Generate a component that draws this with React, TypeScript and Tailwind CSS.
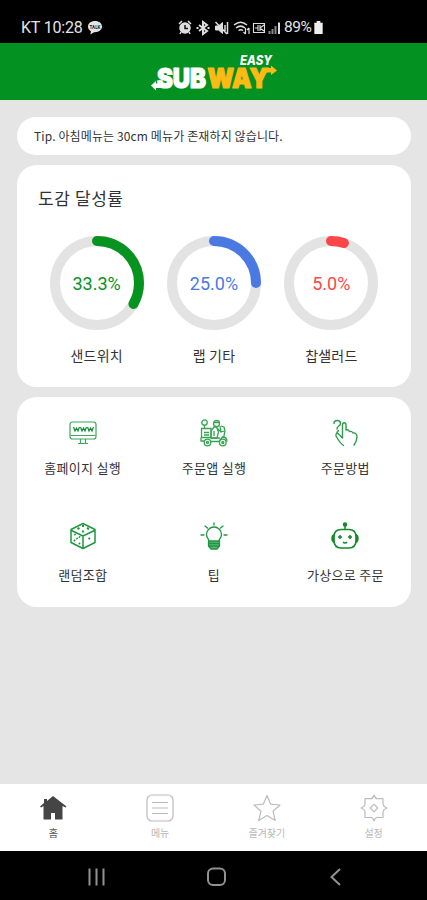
import type { ReactNode } from 'react';

type RingProps = {
  label: string;
  percent: number;
  color: string;
};

type TileProps = {
  label: string;
  icon: ReactNode;
};

type TabProps = {
  label: string;
  icon: ReactNode;
  active?: boolean;
};

const rings: RingProps[] = [
  { label: '샌드위치', percent: 33.3, color: '#07931f' },
  { label: '랩 기타', percent: 25, color: '#4a79e4' },
  { label: '찹샐러드', percent: 5, color: '#fb4747' },
];

function StatusBar() {
  return (
    <div className="flex h-[43px] items-center bg-black pl-[21px] pt-[12px] font-['Roboto',sans-serif] text-base text-[#e4e4e4]">
      <span className="w-[62px] whitespace-nowrap tracking-[-0.2px]">KT 10:28</span>
      <svg className="ml-1" width="16" height="16" viewBox="0 0 16 16">
        <path d="M8 1C3.8 1 1 3.4 1 6.600c0 2 1.100 3.700 2.900 4.700L3.400 14.500 7 12.200c4.600.3 8-2.300 8-5.600S12.200 1 8 1z" fill="#e4e4e4" />
        <text x="8" y="8.500" textAnchor="middle" fontSize="4.500" fontWeight="700" fill="#222">TALK</text>
      </svg>
      <svg className="ml-[75px]" width="103" height="16" viewBox="0 0 103 16" fill="none" stroke="#dedede" strokeWidth="1.500">
        <circle cx="7" cy="8" r="5" fill="#dedede" />
        <path d="M1 4l3-3M10 1l3 3M3 12l-1 2M11 12l1 2" />
        <path d="M7 5v3.500h3" stroke="#111" />
        <path d="M21 5l8 6-4 3V2l4 3-8 6" strokeWidth="2" />
        <path d="M19.500 7v2M30.500 7v2" strokeWidth="2" />
        <path d="M37.500 6h3l4-3.500v11l-4-3.500h-3z" fill="#dedede" strokeWidth="1" />
        <path d="M37.500 2L49 14M47 5v6M49.500 2v12" />
        <path d="M56 5c4-3.500 9-3.500 13 0M58 8c3-2.500 6-2.500 9 0M60.500 10.500c1.500-1 3-1 4.500 0" />
        <path d="M67.500 14V8M65.500 12l2 2M71 8v6M69 10l2-2" strokeWidth="1.200" />
        <path d="M75 3.500h12M75 12.500h12M75.500 3v10M80 5v6M82 5v6M86.500 3v10M77 8h3M82 8l4-3M82 8l4 3" strokeWidth="1.100" />
        <path d="M91.500 14v-3M94.500 14V9M97.500 14V6" stroke="#888" strokeWidth="2" />
        <path d="M101 14V2.500" strokeWidth="2" />
      </svg>
      <span className="ml-[3px] w-7 whitespace-nowrap text-[15.500px] tracking-[-0.4px]">89%</span>
      <svg className="ml-[2px]" width="9" height="13" viewBox="0 0 9 14" fill="#eee">
        <path d="M2.500 0h4v2H9v12H0V2h2.500z" />
      </svg>
    </div>
  );
}

function Logo() {
  return (
    <svg width="128" height="42" viewBox="0 0 128 42" fontFamily="Inter, sans-serif">
      <g fontSize="27" fontWeight="900" strokeWidth="1.200" strokeLinejoin="round">
        <text x="7" y="34.500" textLength="49" lengthAdjust="spacingAndGlyphs" fill="#fff" stroke="#fff">SUB</text>
        <text x="57.500" y="34.500" textLength="61" lengthAdjust="spacingAndGlyphs" fill="#fcba15" stroke="#fcba15">WAY</text>
      </g>
      <path d="M1 32.500l5-4.500v2.500h6V35H6v2.500z" fill="#fff" />
      <path d="M115 15h6v-2.500l6 5-6 4.500v-2.500h-6z" fill="#fcba15" />
      <text x="90" y="11.500" fontSize="13" fontWeight="800" fontStyle="italic" textLength="32" lengthAdjust="spacingAndGlyphs" fill="#fff">EASY</text>
    </svg>
  );
}

function Ring({ label, percent, color }: RingProps) {
  return (
    <div className="flex flex-col items-center">
      <div className="grid size-[94px] place-items-center">
        <svg className="col-start-1 row-start-1" width="94" height="94" viewBox="0 0 94 94" fill="none" strokeWidth="10">
          <circle cx="47" cy="47" r="42" stroke="#e3e3e3" />
          <circle
            cx="47"
            cy="47"
            r="42"
            stroke={color}
            strokeLinecap="round"
            pathLength="100"
            strokeDasharray={`${percent} 100`}
            transform="rotate(-90 47 47)"
          />
        </svg>
        <span
          className="col-start-1 row-start-1 pt-[2px] font-['Roboto',sans-serif] text-[18px] leading-none"
          style={{ color }}
        >
          {percent.toFixed(1)}%
        </span>
      </div>
      <span className="mt-[15px] text-[14px] leading-5 tracking-[0.2px]">{label}</span>
    </div>
  );
}

function MonitorIcon() {
  return (
    <svg width="28" height="28" viewBox="0 0 28 28" fill="none" stroke="#3fa65a" strokeWidth="1.200">
      <rect x="1" y="3" width="26" height="17" rx="2.500" />
      <path d="M1.500 16.500h25M11.500 20v4M16.500 20v4M9 24.500h10" />
      <path d="M4.500 8l1.500 4 1.500-3 1.500 3 1.500-4M11.500 8l1.500 4 1.500-3 1.500 3 1.500-4M18.500 8l1.500 4 1.500-3 1.500 3 1.500-4" stroke="#128a35" />
    </svg>
  );
}

function ScooterIcon() {
  return (
    <svg width="28" height="28" viewBox="0 0 28 28" fill="none" stroke="#36a552" strokeWidth="1.300">
      <circle cx="4.500" cy="3.500" r="2.700" />
      <path d="M4.500 6v3M1.500 9.500H11v9H1.500zM4 13.500h5M4 16h5" />
      <circle cx="16.500" cy="4.500" r="3" />
      <path d="M13 3.500h7M14 8l-3 4v7h6l1.500-6-2-5zM17 9l4 4 3-1M21 7l3 1 1 4-1.500 7M20 7l1 6" />
      <path d="M1 18.500V22h3M11 22.500h8l3.500-4.500c3 0 4.500 2 4.500 4.500M11 19h9M14 12v5" />
      <circle cx="7.500" cy="23.500" r="3.300" />
      <circle cx="22.800" cy="23.500" r="3.300" />
      <circle cx="7.500" cy="23.500" r="1" />
      <circle cx="22.800" cy="23.500" r="1" />
    </svg>
  );
}

function GestureIcon() {
  return (
    <svg width="28" height="28" viewBox="0 0 28 28" fill="none" stroke="#2c9d4a" strokeWidth="1.400" strokeLinecap="round" strokeLinejoin="round">
      <path d="M3 4.500C3 .5 9.500.5 9.500 4.500 9.500 7.500 6 6.500 6 10" />
      <path d="M12.500 26.500c-3-2-5-5-7.500-9.500-.5-3 1.500-3.500 3-1.500l3.500 3.500V6c0-3 3.500-3 3.500 0v5c1.500-.5 3 .5 3.500 1.500 2-.5 3 .5 3.500 1.500 2.500-.5 4 1.500 4 4 0 3-1 5-3 8" />
      <path d="M6 13.500l1.500-2" />
    </svg>
  );
}

function DiceIcon() {
  return (
    <svg width="28" height="28" viewBox="0 0 28 28" fill="none" stroke="#219641" strokeWidth="1.500" strokeLinejoin="round">
      <path d="M14 1.500l12 6v13l-12 6-12-6v-13zM2.500 8.500L14 14l11.500-5.500M14 14v12" />
      <path d="M8.500 7l2-1M13 4h2M18 6l2 1M13 9.500h2M5.500 12l1 1M10 14.500l1 1M7.500 16l1 1M5 18l1 1M10 21l1 1M19.500 17l1.500-1" strokeWidth="2" />
    </svg>
  );
}

function BulbIcon() {
  return (
    <svg width="28" height="28" viewBox="0 0 28 28" fill="none" stroke="#219641" strokeWidth="1.300" strokeLinecap="round">
      <path d="M9 19c0-2-2.500-3-2.500-6.500a7.500 7.500 0 0 1 15 0C21.500 16 19 17 19 19" />
      <path d="M8.500 19h11v5l-2.500 3h-6l-2.500-3z" fill="#219641" fillOpacity="0.7" />
      <path d="M9 21.500h10M9 24h10M14 1v2M5 4l2.500 2M23 4l-2.500 2M1 13h3M24 13h3" />
    </svg>
  );
}

function RobotIcon() {
  return (
    <svg width="28" height="28" viewBox="0 0 28 28" fill="none" stroke="#12892a" strokeWidth="1.500">
      <circle cx="14" cy="2.500" r="1.500" fill="#12892a" />
      <path d="M14 4v4M10 7.500h8c5 0 7 3 7 7.500v3c0 5-2 8-7 8h-8c-5 0-7-3-7-8v-3c0-4.500 2-7.500 7-7.500z" />
      <path d="M2.500 13C.5 14 .5 19 2.500 20zM25.500 13c2 1 2 6 0 7z" fill="#12892a" />
      <path d="M9 13v4M7 15h4M19 13v4M17 15h4M12 20c1 1.200 3 1.200 4 0" />
    </svg>
  );
}

const shortcuts: TileProps[] = [
  { label: '홈페이지 실행', icon: <MonitorIcon /> },
  { label: '주문앱 실행', icon: <ScooterIcon /> },
  { label: '주문방법', icon: <GestureIcon /> },
];

const extras: TileProps[] = [
  { label: '랜덤조합', icon: <DiceIcon /> },
  { label: '팁', icon: <BulbIcon /> },
  { label: '가상으로 주문', icon: <RobotIcon /> },
];

const tabs: TabProps[] = [
  {
    label: '홈',
    active: true,
    icon: (
      <svg width="28" height="28" viewBox="0 0 28 28" fill="#454545">
        <path d="M14 2L27.500 12.500l-1 1L23.500 12v13.500H16V19h-4v6.500H4.500V12L2 13.500l-1-1L5 9V5h3v2z" />
      </svg>
    ),
  },
  {
    label: '메뉴',
    icon: (
      <svg width="28" height="28" viewBox="0 0 28 28" fill="none" stroke="#bcbcbc" strokeWidth="1.200">
        <rect x="1" y="1" width="26" height="26" rx="5" />
        <path d="M6 8.500h16M6 14h16M6 19.500h16" />
      </svg>
    ),
  },
  {
    label: '즐겨찾기',
    icon: (
      <svg width="28" height="28" viewBox="0 0 28 28" fill="none" stroke="#bcbcbc" strokeWidth="1.200" strokeLinejoin="round">
        <path d="M14 1.500l3.700 8.700 9.300.8-7 6.200 2.200 9.300-8.200-5-8.200 5L8 17.200 1 11l9.300-.8z" />
      </svg>
    ),
  },
  {
    label: '설정',
    icon: (
      <svg width="28" height="28" viewBox="0 0 28 28" fill="none" stroke="#bcbcbc" strokeWidth="1.200" strokeLinejoin="round">
        <path d="M14 1c1 3 2.500 4 4 3.700L23 4.500V10c0 2 1.500 3 4 4-2.500 1-4 2-4 4v5.500l-5-.2c-1.500-.3-3 .7-4 3.700-1-3-2.500-4-4-3.700l-5 .2V18c0-2-1.500-3-4-4 2.500-1 4-2 4-4V4.500l5 .2C11.500 5 13 4 14 1z" />
        <path d="M14 10.200l3.800 3.800-3.800 3.800-3.800-3.800z" />
      </svg>
    ),
  },
];

export default function App() {
  return (
    <div className="flex h-[900px] w-[427px] flex-col overflow-hidden bg-[#e5e5e5] font-['Noto_Sans_CJK_KR',sans-serif] text-[#333]">
      <StatusBar />
      <header className="flex h-[58px] justify-center border-b border-[#d7ead9] bg-[#039222] pt-[10px]">
        <Logo />
      </header>

      <main className="flex flex-1 flex-col gap-[10px] pl-[17px] pr-4 pt-4">
        <p className="flex h-[38px] items-center whitespace-pre rounded-[19px] bg-white pl-[17px] text-[12px] tracking-[0.12px]">
          Tip. 아침메뉴는 30cm 메뉴가 존재하지 않습니다.
        </p>
        <section className="h-[222px] rounded-[20px] bg-white px-[21px] pt-[21px]">
          <h1 className="text-[17px] leading-6 tracking-[0.6px]">도감 달성률</h1>
          <div className="mt-[26px] grid grid-cols-3">
            {rings.map((ring) => (
              <Ring key={ring.label} {...ring} />
            ))}
          </div>
        </section>
        <section className="h-[210px] rounded-[20px] bg-white pt-[22px]">
          <div className="grid grid-cols-3">
            {shortcuts.map(({ label, icon }) => (
              <div key={label} className="flex flex-col items-center gap-[11px]">
                {icon}
                <span className="text-[13px] leading-5 tracking-[0.3px]">{label}</span>
              </div>
            ))}
          </div>
          <div className="mt-[44px] grid grid-cols-3">
            {extras.map(({ label, icon }) => (
              <div key={label} className="flex flex-col items-center gap-[15px]">
                {icon}
                <span className="text-[13px] leading-5 tracking-[0.3px]">{label}</span>
              </div>
            ))}
          </div>
        </section>
      </main>

      <nav className="grid h-[67px] grid-cols-4 bg-white pt-[10px]">
        {tabs.map(({ label, icon, active }) => (
          <div key={label} className="flex flex-col items-center gap-[3px]">
            {icon}
            <span className={active ? 'text-[10px] leading-4 text-[#555]' : 'text-[10px] leading-4 text-[#b8b8b8]'}>
              {label}
            </span>
          </div>
        ))}
      </nav>

      <footer className="flex h-[49px] justify-center bg-black pt-[15px]">
        <svg width="260" height="22" viewBox="0 0 260 22" fill="none" stroke="#929292" strokeWidth="2">
          <path d="M5.500 2.500v17M12.500 2.500v17M19.500 2.500v17" />
          <rect x="124" y="2.500" width="17" height="16.500" rx="5" />
          <path d="M256 3l-8.500 8 8.500 8" />
        </svg>
      </footer>
    </div>
  );
}
